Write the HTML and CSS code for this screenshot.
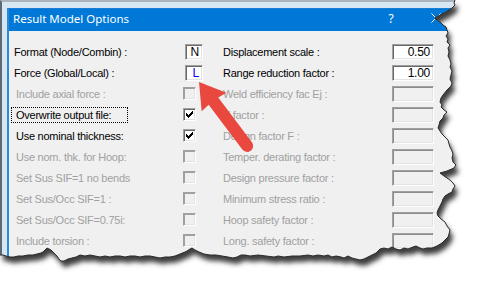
FILE: index.html
```html
<!DOCTYPE html>
<html>
<head>
<meta charset="utf-8">
<link rel="stylesheet" href="styles.css">
</head>
<body>
<div class="screen">
  <div class="frame">
    <div class="dialog">
      <div class="titlebar">
        <span class="title">Result Model Options</span>
        <span class="help">?</span>
        <span class="close"><svg width="10" height="10" viewBox="0 0 10 10"><path d="M0.5 0.5 L9.5 9.5 M9.5 0.5 L0.5 9.5" stroke="#fff" stroke-width="1" fill="none"/></svg></span>
      </div>
      <div class="body">
        <div class="form">
          <div class="lbl tbl">Format (Node/Combin) :</div>
          <div class="ctl"><div class="tbox small">N</div></div>
          <div class="rlbl">Displacement scale :</div>
          <div class="tbox wide">0.50</div>

          <div class="lbl tbl">Force (Global/Local) :</div>
          <div class="ctl"><div class="tbox small blue">L</div></div>
          <div class="rlbl">Range reduction factor :</div>
          <div class="tbox wide">1.00</div>

          <div class="lbl dis">Include axial force :</div>
          <div class="ctl"><div class="cb dis"></div></div>
          <div class="rlbl dis">Weld efficiency fac Ej :</div>
          <div class="tbox wide dis"></div>

          <div class="lbl flbl"><span class="focus">Overwrite output file:</span></div>
          <div class="ctl"><div class="cb"><svg class="chk" width="7" height="7" viewBox="0 0 7 7" shape-rendering="crispEdges"><path d="M6 0h1v1h-1z M5 1h2v1h-2z M0 2h1v1h-1z M4 2h3v1h-3z M0 3h2v1h-2z M3 3h3v1h-3z M0 4h5v1h-5z M1 5h3v1h-3z M2 6h1v1h-1z" fill="#000"/></svg></div></div>
          <div class="rlbl dis">Y factor :</div>
          <div class="tbox wide dis"></div>

          <div class="lbl">Use nominal thickness:</div>
          <div class="ctl"><div class="cb"><svg class="chk" width="7" height="7" viewBox="0 0 7 7" shape-rendering="crispEdges"><path d="M6 0h1v1h-1z M5 1h2v1h-2z M0 2h1v1h-1z M4 2h3v1h-3z M0 3h2v1h-2z M3 3h3v1h-3z M0 4h5v1h-5z M1 5h3v1h-3z M2 6h1v1h-1z" fill="#000"/></svg></div></div>
          <div class="rlbl dis">Design factor F :</div>
          <div class="tbox wide dis"></div>

          <div class="lbl dis">Use nom. thk. for Hoop:</div>
          <div class="ctl"><div class="cb dis"></div></div>
          <div class="rlbl dis">Temper. derating factor :</div>
          <div class="tbox wide dis"></div>

          <div class="lbl dis">Set Sus SIF=1 no bends</div>
          <div class="ctl"><div class="cb dis"></div></div>
          <div class="rlbl dis">Design pressure factor :</div>
          <div class="tbox wide dis"></div>

          <div class="lbl dis">Set Sus/Occ SIF=1 :</div>
          <div class="ctl"><div class="cb dis"></div></div>
          <div class="rlbl dis">Minimum stress ratio :</div>
          <div class="tbox wide dis"></div>

          <div class="lbl dis">Set Sus/Occ SIF=0.75i:</div>
          <div class="ctl"><div class="cb dis"></div></div>
          <div class="rlbl dis">Hoop safety factor :</div>
          <div class="tbox wide dis"></div>

          <div class="lbl dis">Include torsion :</div>
          <div class="ctl"><div class="cb dis"></div></div>
          <div class="rlbl dis">Long. safety factor :</div>
          <div class="tbox wide dis"></div>
        </div>
      </div>
    </div>
  </div>

  <svg class="tear" width="482" height="289" viewBox="0 0 482 289">
    <defs>
      <filter id="blur" x="-10%" y="-10%" width="120%" height="120%"><feGaussianBlur stdDeviation="2.6"/></filter>
      <path id="pshape" d="M0,0 L455,0 454,3 455,5 452,8 449,10 446,12 442,14 438,16 435,18 437,20 440,22 443,25 446,27 447,30 448,33 446,36 448,39 447,42 450,45 448,48 449,52 448,56 450,60 451,64 450,67 452,71 451,75 450,79 452,83 451,86 447,90 443,95 441,98 440,102 442,105 441,107 444,110 447,112 444,115 443,118 440,121 439,125 438,128 440,131 442,134 445,137 448,140 449,144 450,147 452,151 453,154 452,158 453,162 456,165 454,168 447,171 440,173 444,176 450,180 453,183 455,186 453,189 452,192 448,194 445,196 443,199 442,202 440,206 438,210 437,213 438,216 441,219 445,222 447,226 450,230 449,234 448,237 445,240 442,243 437,246 432,248 427,248 423,249 420,248 416,246 413,247 408,249 404,248 400,250 396,249 392,247 388,249 384,248 380,249 376,253 372,255 368,257 364,259 360,260 356,259 352,258 348,256 344,258 341,257 336,256 332,257 328,255 324,256 318,255 313,256 308,255 300,256 292,256 284,257 278,256 274,257 266,256 258,255 250,256 245,255 241,255 237,257 233,258 228,257 222,256 216,255 210,255 204,254 199,252 195,250 192,248 190,249 187,251 185,252 180,254 175,256 170,257 165,257 160,258 155,257 150,256 145,256 140,257 135,256 130,256 125,257 120,256 115,256 110,257 105,256 100,257 95,256 90,255 85,256 80,255 76,257 72,258 68,259 64,261 61,261 59,259 57,256 55,254 53,252 51,250 49,249 47,248 45,250 43,252 41,253 37,254 33,255 28,255 23,256 18,256 14,257 10,257 6,256 3,255 0,255 Z"/>
      <mask id="outside" maskUnits="userSpaceOnUse" x="0" y="0" width="482" height="289">
        <rect width="482" height="289" fill="#fff"/>
        <use href="#pshape" fill="#000"/>
      </mask>
    </defs>
    <rect width="482" height="289" fill="#fff" mask="url(#outside)"/>
    <g mask="url(#outside)">
      <use href="#pshape" fill="#3c3c3c" transform="translate(3,6)" filter="url(#blur)"/>
    </g>
    <path fill="none" stroke="#2a2a2a" stroke-width="1" d="M455,0 454,3 455,5 452,8 449,10 446,12 442,14 438,16 435,18 437,20 440,22 443,25 446,27 447,30 448,33 446,36 448,39 447,42 450,45 448,48 449,52 448,56 450,60 451,64 450,67 452,71 451,75 450,79 452,83 451,86 447,90 443,95 441,98 440,102 442,105 441,107 444,110 447,112 444,115 443,118 440,121 439,125 438,128 440,131 442,134 445,137 448,140 449,144 450,147 452,151 453,154 452,158 453,162 456,165 454,168 447,171 440,173 444,176 450,180 453,183 455,186 453,189 452,192 448,194 445,196 443,199 442,202 440,206 438,210 437,213 438,216 441,219 445,222 447,226 450,230 449,234 448,237 445,240 442,243 437,246 432,248 427,248 423,249 420,248 416,246 413,247 408,249 404,248 400,250 396,249 392,247 388,249 384,248 380,249 376,253 372,255 368,257 364,259 360,260 356,259 352,258 348,256 344,258 341,257 336,256 332,257 328,255 324,256 318,255 313,256 308,255 300,256 292,256 284,257 278,256 274,257 266,256 258,255 250,256 245,255 241,255 237,257 233,258 228,257 222,256 216,255 210,255 204,254 199,252 195,250 192,248 190,249 187,251 185,252 180,254 175,256 170,257 165,257 160,258 155,257 150,256 145,256 140,257 135,256 130,256 125,257 120,256 115,256 110,257 105,256 100,257 95,256 90,255 85,256 80,255 76,257 72,258 68,259 64,261 61,261 59,259 57,256 55,254 53,252 51,250 49,249 47,248 45,250 43,252 41,253 37,254 33,255 28,255 23,256 18,256 14,257 10,257 6,256 3,255 0,255"/>
  </svg>

  <svg class="arrow" width="482" height="289" viewBox="0 0 482 289">
    <path d="M0,0 L25,-15.5 L24,-6 L80,-6 A6,6 0 0 1 80,6 L24,6 L25,15.5 Z" fill="#e8483d" transform="translate(199,82) rotate(53)"/>
  </svg>
</div>
</body>
</html>
```

FILE: styles.css
```css
html, body {
  margin: 0;
  padding: 0;
  background: #fff;
}

.screen {
  position: relative;
  width: 482px;
  height: 289px;
  overflow: hidden;
}

.frame {
  width: 470px;
  height: 289px;
  box-sizing: border-box;
  border-top: 2px solid #aab3bb;
  border-left: 2px solid #5e6873;
  background: #d6e6f2;
  padding: 6px 0 0 5px;
}

.dialog {
  height: 100%;
  box-sizing: border-box;
  border-left: 2px solid #2d8ad6;
  border-top: 1px solid #1a7fd4;
  background: #f0f0f0;
  display: flex;
  flex-direction: column;
}

.titlebar {
  height: 22px;
  flex: none;
  background: #0078d7;
  color: #fff;
  display: flex;
  align-items: flex-start;
  padding-right: 12px;
  font-family: "Noto Sans", "Open Sans", sans-serif;
}

.title {
  flex: 1;
  font-size: 11.5px;
  line-height: 16px;
  padding: 2px 0 0 4px;
}

.help {
  width: 44px;
  text-align: center;
  font-size: 12px;
  line-height: 16px;
  padding-top: 2px;
}

.close {
  width: 45px;
  display: flex;
  justify-content: center;
  padding-top: 4px;
}

.close svg {
  display: block;
}

.body {
  flex: 1;
  padding: 10px 0 0 2px;
  font-family: "Liberation Sans", Arial, sans-serif;
  font-size: 11px;
  letter-spacing: -0.25px;
  color: #000;
}

.form {
  display: grid;
  grid-template-columns: 172px 40px 169px 42px;
  grid-auto-rows: 21px;
  align-items: center;
}

.lbl {
  padding-left: 5px;
  white-space: nowrap;
}

.lbl.tbl {
  padding-left: 3px;
}

.lbl.flbl {
  padding-left: 0;
}

.rlbl {
  white-space: nowrap;
}

.dis {
  color: #a0a0a0;
}

.focus {
  display: block;
  width: 117px;
  height: 16px;
  box-sizing: border-box;
  border: 1px dotted #000;
  padding-left: 4px;
  line-height: 14px;
}

.ctl {
  display: flex;
  align-items: center;
}

.cb {
  width: 13px;
  height: 13px;
  box-sizing: border-box;
  border: 1px solid;
  border-color: #a0a0a0 #fff #fff #a0a0a0;
  box-shadow: inset 1px 1px #696969, inset -1px -1px #e3e3e3;
  background: #fff;
  display: flex;
  align-items: center;
  justify-content: center;
}

.cb.dis {
  background: #f0f0f0;
  box-shadow: inset 1px 1px #a0a0a0, inset -1px -1px #e3e3e3;
}

.chk {
  display: block;
}

.tbox {
  height: 16px;
  box-sizing: border-box;
  border: 1px solid;
  border-color: #a0a0a0 #fff #fff #a0a0a0;
  box-shadow: inset 1px 1px #696969, inset -1px -1px #e3e3e3;
  background: #fff;
  text-align: right;
  padding-right: 3px;
  line-height: 14px;
  font-size: 11px;
}

.tbox.small {
  width: 18px;
  margin-left: 2px;
  font-size: 12px;
}

.tbox.blue {
  color: #0000ff;
}

.tbox.wide {
  width: 42px;
  font-size: 12px;
}

.tbox.dis {
  background: #f0f0f0;
  box-shadow: inset 1px 1px #8c8c8c, inset -1px -1px #e3e3e3;
}

.tear,
.arrow {
  position: absolute;
  left: 0;
  top: 0;
  display: block;
}
```
